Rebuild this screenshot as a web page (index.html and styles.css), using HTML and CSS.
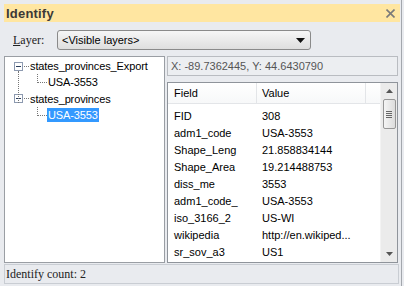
FILE: index.html
```html
<!DOCTYPE html>
<html lang="en">
<head>
  <meta charset="UTF-8">
  <title>Identify</title>
  <link rel="stylesheet" href="styles.css">
</head>
<body>
  <div class="window">
    <div class="title-bar">
      <span class="title">Identify</span>
      <svg class="close" width="9" height="9" viewBox="0 0 9 9">
        <path d="M0.5 0.5 L8.5 8.5 M8.5 0.5 L0.5 8.5" stroke="#7a7a7a" stroke-width="1.6"/>
      </svg>
    </div>

    <div class="toolbar">
      <label class="layer-label"><u>L</u>ayer:</label>
      <div class="combo">
        <span>&lt;Visible layers&gt;</span>
        <svg class="combo-arrow" width="9" height="5" viewBox="0 0 9 5">
          <path d="M0 0 H9 L4.5 5 Z" fill="#111"/>
        </svg>
      </div>
    </div>

    <div class="main">
      <div class="tree">
        <div class="node">
          <span class="expander">
            <svg width="9" height="9" viewBox="0 0 9 9">
              <rect x="0.5" y="0.5" width="8" height="8" fill="#fff" stroke="#8d9ab0"/>
              <path d="M2 4.5 H7" stroke="#2a3d5c"/>
            </svg>
          </span>
          <span class="dots-h"></span>
          <span class="label">states_provinces_Export</span>
        </div>
        <div class="node child">
          <span class="elbow"></span>
          <span class="label">USA-3553</span>
        </div>
        <div class="node">
          <span class="expander">
            <svg width="9" height="9" viewBox="0 0 9 9">
              <rect x="0.5" y="0.5" width="8" height="8" fill="#fff" stroke="#8d9ab0"/>
              <path d="M2 4.5 H7" stroke="#2a3d5c"/>
            </svg>
          </span>
          <span class="dots-h"></span>
          <span class="label">states_provinces</span>
        </div>
        <div class="node child">
          <span class="elbow"></span>
          <span class="label selected">USA-3553</span>
        </div>
        <span class="trunk"></span>
      </div>

      <div class="details">
        <div class="coords">X: -89.7362445, Y: 44.6430790</div>
        <div class="grid">
          <div class="grid-body">
            <div class="grid-header">
              <span class="col-field">Field</span>
              <span class="col-value">Value</span>
              <span class="col-fill"></span>
            </div>
            <div class="rows">
              <div class="row"><span class="col-field">FID</span><span class="col-value">308</span></div>
              <div class="row"><span class="col-field">adm1_code</span><span class="col-value">USA-3553</span></div>
              <div class="row"><span class="col-field">Shape_Leng</span><span class="col-value">21.858834144</span></div>
              <div class="row"><span class="col-field">Shape_Area</span><span class="col-value">19.214488753</span></div>
              <div class="row"><span class="col-field">diss_me</span><span class="col-value">3553</span></div>
              <div class="row"><span class="col-field">adm1_code_</span><span class="col-value">USA-3553</span></div>
              <div class="row"><span class="col-field">iso_3166_2</span><span class="col-value">US-WI</span></div>
              <div class="row"><span class="col-field">wikipedia</span><span class="col-value">http://en.wikiped...</span></div>
              <div class="row"><span class="col-field">sr_sov_a3</span><span class="col-value">US1</span></div>
            </div>
          </div>
          <div class="scrollbar">
            <svg class="sb-arrow" width="7" height="4" viewBox="0 0 7 4"><path d="M3.5 0 L7 4 H0 Z" fill="#555"/></svg>
            <div class="thumb">
              <span></span><span></span><span></span><span></span>
            </div>
            <div class="track"></div>
            <svg class="sb-arrow" width="7" height="4" viewBox="0 0 7 4"><path d="M0 0 H7 L3.5 4 Z" fill="#555"/></svg>
          </div>
        </div>
      </div>
    </div>

    <div class="status">Identify count: 2</div>
  </div>
</body>
</html>
```

FILE: styles.css
```css
body {
  margin: 0;
  background: #e9ebef;
  font-family: 'Liberation Sans', Arial, sans-serif;
  font-size: 11px;
  color: #000;
}

.window {
  width: 402px;
  height: 286px;
  box-sizing: border-box;
  padding: 4px 0 0 4px;
  border-right: 1px solid #a3a7ad;
  overflow: hidden;
}

.title-bar {
  width: 396px;
  height: 18px;
  background: #ffe6a1;
  display: flex;
  align-items: center;
  justify-content: space-between;
  box-sizing: border-box;
  padding: 0 5px 0 2px;
}

.title {
  font-weight: bold;
  font-size: 13px;
  letter-spacing: 0.2px;
  color: #3c3a36;
}

.close {
  display: block;
}

.toolbar {
  height: 34px;
  display: flex;
  align-items: center;
  padding-top: 2px;
  box-sizing: border-box;
}

.layer-label {
  font-family: 'Liberation Serif', 'Times New Roman', serif;
  font-size: 12px;
  color: #222;
  width: 53px;
  padding-left: 9px;
  box-sizing: border-box;
}

.combo {
  width: 254px;
  height: 20px;
  box-sizing: border-box;
  border: 1px solid #8a8a8a;
  border-radius: 3px;
  background: linear-gradient(#f6f6f6, #dedede);
  display: flex;
  align-items: center;
  justify-content: space-between;
  padding: 0 5px 0 4px;
}

.combo-arrow {
  display: block;
}

.main {
  display: flex;
  gap: 2px;
  height: 207px;
}

.tree {
  position: relative;
  width: 161px;
  box-sizing: border-box;
  background: #fff;
  border: 1px solid #9a9ea4;
  padding-top: 1px;
  letter-spacing: -0.12px;
}

.node {
  display: flex;
  align-items: center;
  height: 16px;
}

.expander {
  width: 9px;
  height: 9px;
  margin-left: 9px;
}

.expander svg {
  display: block;
}

.dots-h {
  width: 5px;
  margin: 0 1px;
  border-top: 1px dotted #777;
}

.child {
  padding-left: 32px;
  height: 16.5px;
}

.elbow {
  align-self: flex-start;
  width: 9px;
  height: 8px;
  border-left: 1px dotted #777;
  border-bottom: 1px dotted #777;
}

.label {
  line-height: 14px;
  white-space: nowrap;
}

.child .label {
  padding: 0 1px;
}

.selected {
  background: #3399ff;
  color: #fff;
}

.trunk {
  position: absolute;
  left: 13px;
  top: 14px;
  height: 32px;
  border-left: 1px dotted #777;
}

.details {
  width: 231px;
  display: flex;
  flex-direction: column;
  gap: 6px;
}

.coords {
  height: 20px;
  box-sizing: border-box;
  border: 1px solid #b9bcc1;
  background: #eceef1;
  color: #555;
  padding: 3px 0 0 3px;
}

.grid {
  flex: 1;
  display: flex;
  border: 1px solid #8f949b;
  background: #fff;
}

.grid-body {
  flex: 1;
}

.grid-header {
  display: flex;
  height: 20px;
  align-items: center;
  border-bottom: 1px solid #e3e5e8;
  background: linear-gradient(#ffffff, #f7f8f9);
}

.grid-header span {
  height: 100%;
  display: flex;
  align-items: center;
  box-sizing: border-box;
  border-right: 1px solid #e3e5e8;
}

.col-field {
  width: 89px;
  padding-left: 6px;
  box-sizing: border-box;
}

.col-value {
  width: 109px;
  padding-left: 5px;
  box-sizing: border-box;
  white-space: nowrap;
}

.grid-header .col-fill {
  flex: 1;
  border-right: none;
}

.rows {
  padding-top: 3px;
}

.row {
  display: flex;
  height: 17px;
  align-items: center;
}

.scrollbar {
  width: 17px;
  background: #ebebeb;
  border-left: 1px solid #f3f3f3;
  display: flex;
  flex-direction: column;
  align-items: center;
  padding: 6px 0 6px;
  box-sizing: border-box;
}

.sb-arrow {
  display: block;
  flex-shrink: 0;
}

.thumb {
  width: 13px;
  height: 30px;
  margin-top: 6px;
  box-sizing: border-box;
  border: 1px solid #969696;
  border-radius: 2px;
  background: linear-gradient(90deg, #f4f4f4, #dcdcdc);
  display: flex;
  flex-direction: column;
  justify-content: center;
  align-items: center;
  gap: 1px;
}

.thumb span {
  width: 6px;
  height: 1px;
  background: #666;
}

.track {
  flex: 1;
}

.status {
  margin-top: 1px;
  width: 395px;
  height: 20px;
  box-sizing: border-box;
  border: 1px solid #c9cdd3;
  font-family: 'Liberation Serif', 'Times New Roman', serif;
  font-size: 12px;
  color: #222;
  padding: 2px 0 0 1px;
}
```
